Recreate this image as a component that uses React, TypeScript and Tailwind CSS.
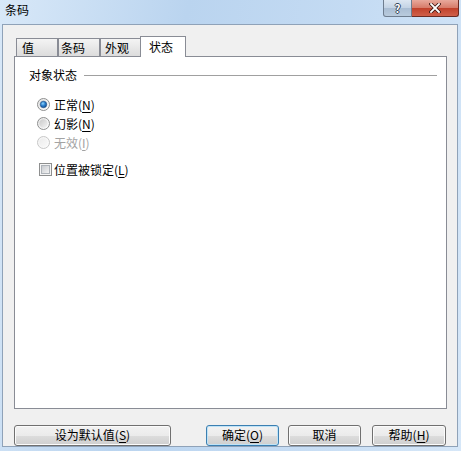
import React from "react";

const font = { fontFamily: '"Noto Sans CJK SC", "Liberation Sans", sans-serif' };

function Radio({ checked, disabled, id }: { checked?: boolean; disabled?: boolean; id: string }) {
  return (
    <svg width="13" height="13" viewBox="0 0 13 13" className="shrink-0">
      <defs>
        <linearGradient id={`o-${id}`} x1="0" y1="0" x2="1" y2="1">
          <stop offset="0" stopColor={disabled ? "#f4f4f4" : "#e6e6e6"} />
          <stop offset="1" stopColor={disabled ? "#fbfbfb" : "#ffffff"} />
        </linearGradient>
        <linearGradient id={`i-${id}`} x1="0" y1="0" x2="1" y2="1">
          <stop offset="0" stopColor={disabled ? "#ececec" : "#c9c9c9"} />
          <stop offset="1" stopColor={disabled ? "#f9f9f9" : "#f4f4f4"} />
        </linearGradient>
        <radialGradient id={`d-${id}`} cx="0.4" cy="0.35" r="0.7">
          <stop offset="0" stopColor="#8fd4fb" />
          <stop offset="0.5" stopColor="#2a7fcf" />
          <stop offset="1" stopColor="#124a8c" />
        </radialGradient>
      </defs>
      <circle cx="6.5" cy="6.5" r="6" fill={`url(#o-${id})`} stroke={disabled ? "#c7c7c7" : "#8e8f8f"} strokeWidth="1" />
      <circle cx="6.5" cy="6.5" r="4.2" fill={`url(#i-${id})`} />
      {checked && <circle cx="6.5" cy="6.5" r="3.2" fill={`url(#d-${id})`} stroke="#1b4d86" strokeWidth="0.6" />}
    </svg>
  );
}

function Checkbox() {
  return (
    <svg width="13" height="13" viewBox="0 0 13 13" className="shrink-0">
      <defs>
        <linearGradient id="cbg" x1="0" y1="0" x2="1" y2="1">
          <stop offset="0" stopColor="#c6c9ce" />
          <stop offset="1" stopColor="#f5f5f5" />
        </linearGradient>
      </defs>
      <rect x="0.5" y="0.5" width="12" height="12" fill="#f6f6f6" stroke="#8e8f8f" />
      <rect x="2.5" y="2.5" width="8" height="8" fill="url(#cbg)" stroke="#aeb3b9" />
    </svg>
  );
}

function Mn({ pre, k }: { pre: string; k: string }) {
  return (
    <>
      {pre}(<span className="underline underline-offset-2">{k}</span>)
    </>
  );
}

function Btn({ children, w, def }: { children: React.ReactNode; w: string; def?: boolean }) {
  return (
    <button
      type="button"
      className={`${w} h-[21px] shrink-0 rounded-[3px] border text-[12px] leading-none text-black bg-[linear-gradient(to_bottom,#f2f2f2_0%,#ebebeb_50%,#dddddd_50%,#cfcfcf_100%)] ${
        def
          ? "border-[#3c7fb1] shadow-[inset_0_0_0_1px_#bfe3f7]"
          : "border-[#707070] shadow-[inset_0_0_0_1px_#fbfbfb]"
      }`}
    >
      {children}
    </button>
  );
}

function Tab({ label, w, pl }: { label: string; w: string; pl: string }) {
  return (
    <div
      className={`${w} ${pl} h-[18px] shrink-0 border border-b-0 border-[#898c95] bg-[linear-gradient(to_bottom,#f4f4f4,#dcdcdc)] text-[12px] leading-[17px]`}
    >
      {label}
    </div>
  );
}

export default function App() {
  return (
    <div
      style={font}
      className="w-[461px] h-[451px] flex flex-col bg-[linear-gradient(100deg,#d8e8f8_0%,#bad4ef_35%,#c4dbf3_65%,#d6e7f8_100%)] text-black"
    >
      {/* title bar */}
      <div className="h-[24px] flex shrink-0">
        <div className="pl-[5px] pt-[3px] text-[12px] leading-[14px]">条码</div>
        <div className="ml-auto mr-[2px] flex h-[17px]">
          <div className="w-[29px] h-full rounded-bl-[3px] border border-t-0 border-[#6e7d8f] bg-[linear-gradient(to_bottom,#dce7f2_0%,#c3d3e4_50%,#a9bdd3_50%,#b9cbdd_100%)] flex items-center justify-center">
            <span className="text-[11px] font-bold leading-[12px] text-white [text-shadow:1px_0_0_#34465c,-1px_0_0_#34465c,0_1px_0_#34465c,0_-1px_0_#34465c]">?</span>
          </div>
          <div className="w-[47px] h-full rounded-br-[3px] border border-l-0 border-t-0 border-[#6b2a22] bg-[linear-gradient(to_bottom,#e8a99c_0%,#d67a68_50%,#c0402a_50%,#d0604a_100%)] flex items-center justify-center">
            <svg width="12" height="10" viewBox="0 0 12 10">
              <path d="M2 1 L10 9 M10 1 L2 9" stroke="#3b1410" strokeWidth="3.4" strokeLinecap="square" />
              <path d="M2 1 L10 9 M10 1 L2 9" stroke="#ffffff" strokeWidth="1.8" strokeLinecap="square" />
            </svg>
          </div>
        </div>
      </div>

      {/* client */}
      <div className="ml-[2px] mr-[3px] h-[423px] border border-[#8fa2b8] bg-[#f0f0f0] flex flex-col">
        <div className="mt-[11px] ml-[13px] h-[20px] flex items-end">
          <Tab label="值" w="w-[42px]" pl="pl-[5px]" />
          <Tab label="条码" w="w-[42px]" pl="pl-[2px]" />
          <Tab label="外观" w="w-[41px]" pl="pl-[4px]" />
          <div className="relative z-10 -ml-px -mb-px w-[46px] h-[21px] shrink-0 border border-b-0 border-[#898c95] bg-white pl-[8px] text-[12px] leading-[19px]">
            状态
          </div>
        </div>

        <div className="ml-[11px] w-[433px] h-[353px] shrink-0 border border-[#898c95] bg-white flex flex-col text-[12px]">
          <div className="mt-[12px] ml-[14px] mr-[9px] h-[12px] flex items-center">
            <span className="leading-[12px]">对象状态</span>
            <div className="ml-[7px] flex-1 h-px bg-[#a0a0a0]" />
          </div>

          <div className="mt-[14px] ml-[22px] h-[19px] flex items-center gap-[4px]">
            <Radio checked id="r1" />
            <span className="leading-[12px]"><Mn pre="正常" k="N" /></span>
          </div>
          <div className="ml-[22px] h-[19px] flex items-center gap-[4px]">
            <Radio id="r2" />
            <span className="leading-[12px]"><Mn pre="幻影" k="N" /></span>
          </div>
          <div className="ml-[22px] h-[19px] flex items-center gap-[4px] text-[#a3a3a3]">
            <Radio disabled id="r3" />
            <span className="leading-[12px]"><Mn pre="无效" k="I" /></span>
          </div>

          <div className="mt-[8px] ml-[24px] h-[19px] flex items-center gap-[2px]">
            <Checkbox />
            <span className="leading-[12px]"><Mn pre="位置被锁定" k="L" /></span>
          </div>
        </div>

        <div className="mt-[12px] flex">
          <div className="ml-[11px]">
            <Btn w="w-[157px]"><Mn pre="设为默认值" k="S" /></Btn>
          </div>
          <div className="ml-[35px]">
            <Btn w="w-[73px]" def><Mn pre="确定" k="O" /></Btn>
          </div>
          <div className="ml-[9px]">
            <Btn w="w-[73px]">取消</Btn>
          </div>
          <div className="ml-[11px]">
            <Btn w="w-[74px]"><Mn pre="帮助" k="H" /></Btn>
          </div>
        </div>
      </div>
    </div>
  );
}
